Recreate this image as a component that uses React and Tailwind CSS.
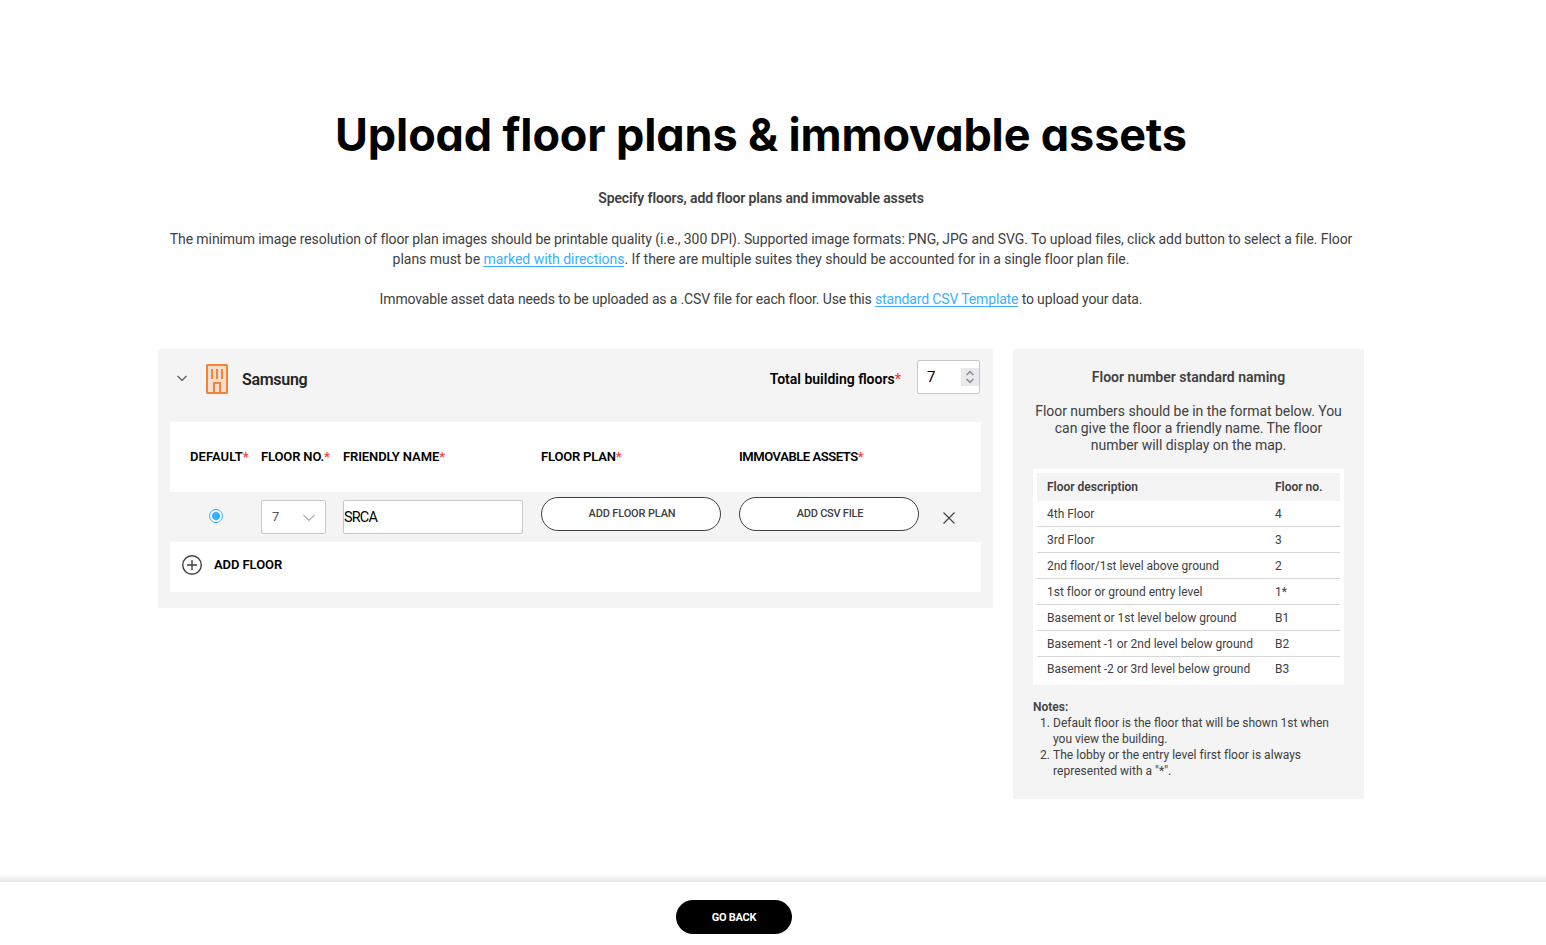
const Star = () => <span className="text-[#ff3b3b]">*</span>;

const floors = [
  ["4th Floor", "4"],
  ["3rd Floor", "3"],
  ["2nd floor/1st level above ground", "2"],
  ["1st floor or ground entry level", "1*"],
  ["Basement or 1st level below ground", "B1"],
  ["Basement -1 or 2nd level below ground", "B2"],
  ["Basement -2 or 3rd level below ground", "B3"],
];

const Link = ({ children }) => (
  <a className="inline-block h-[17px] border-b border-[#38b1ff] leading-[18px] text-[#38b1ff]">{children}</a>
);

function BuildingIcon() {
  return (
    <svg width="22" height="30" viewBox="0 0 22 30" fill="none" stroke="#f08437" strokeWidth="2">
      <rect x="1" y="1" width="20" height="28" rx="0.6" fill="#f6dfd0" />
      <path d="M6 5v10M11 5v10M16 5v10" />
      <path d="M8 29V19h6v10" />
    </svg>
  );
}

function BuildingPanel() {
  return (
    <section className="h-[259px] w-[835px] rounded-[2px] bg-[#f4f4f4] px-3">
      <div className="flex h-[73px] pt-[11px]">
        <svg className="ml-[6px] mt-[14px]" width="12" height="9" viewBox="0 0 12 9" fill="none" stroke="#555" strokeWidth="1.2">
          <path d="M1.5 2L6 6.5L10.5 2" />
        </svg>
        <div className="ml-[18px] mt-1">
          <BuildingIcon />
        </div>
        <div className="ml-[14px] mt-[10px] text-[16px] leading-5 font-semibold tracking-[-0.3px] text-[#252525]">Samsung</div>
        <div className="ml-auto mt-[9px] text-[14px] leading-5 font-semibold text-black">
          Total building floors
          <Star />
        </div>
        <div className="ml-4 mr-px flex h-[34px] w-[63px] items-center justify-between rounded-[2px] border border-[#c8c8c8] bg-white pl-[9px]">
          <span className="text-[15px] leading-5 text-black">7</span>
          <span className="flex h-[18px] w-[18px] items-center justify-center bg-[#e9e9ed]">
            <svg width="10" height="14" viewBox="0 0 10 14" fill="none" stroke="#8f8f9d" strokeWidth="1.7">
              <path d="M1.5 5L5 1.7L8.5 5M1.5 9L5 12.3L8.5 9" />
            </svg>
          </span>
        </div>
      </div>

      <div className="grid h-[70px] grid-cols-[71px_82px_198px_198px_auto] items-center bg-white pl-5 text-[13px] font-semibold text-black">
        <div className="tracking-[0.06px]">DEFAULT<Star /></div>
        <div className="tracking-[-0.14px]">FLOOR NO.<Star /></div>
        <div className="tracking-[-0.1px]">FRIENDLY NAME<Star /></div>
        <div className="tracking-[-0.18px]">FLOOR PLAN<Star /></div>
        <div className="tracking-[-0.43px]">IMMOVABLE ASSETS<Star /></div>
      </div>

      <div className="flex h-[50px] items-start">
        <div className="ml-[39px] mt-[17px] flex h-[14px] w-[14px] items-center justify-center rounded-full border border-[#38b1ff] bg-white">
          <div className="h-2 w-2 rounded-full bg-[#38b1ff]" />
        </div>
        <div className="ml-[38px] mt-2 flex h-[34px] w-[65px] items-center justify-between rounded-[2px] border border-[#c8c8c8] bg-white pl-[10px] pr-[9px]">
          <span className="text-[13px] text-[#555]">7</span>
          <svg className="mt-px" width="14" height="8" viewBox="0 0 14 8" fill="none" stroke="#777" strokeWidth="1">
            <path d="M1.5 1L7 6.5L12.5 1" />
          </svg>
        </div>
        <div className="ml-[17px] mt-2 flex h-[34px] w-[180px] items-center rounded-[2px] border border-[#c8c8c8] bg-white pt-0.5 text-[14.5px] tracking-[-0.85px] text-black">
          SRCA
        </div>
        <button className="ml-[18px] mt-[5px] h-[34px] w-[180px] rounded-full border border-[#404040] bg-white pt-px pl-[2px] text-[11px] font-medium tracking-[-0.15px] text-[#404040]">ADD FLOOR PLAN</button>
        <button className="ml-[18px] mt-[5px] h-[34px] w-[180px] rounded-full border border-[#404040] bg-white pt-px pl-[2px] text-[11px] font-medium tracking-[-0.25px] text-[#404040]">ADD CSV FILE</button>
        <svg className="ml-6 mt-5" width="12" height="12" viewBox="0 0 12 12" fill="none" stroke="#404040" strokeWidth="1.1">
          <path d="M0.5 0.5L11.5 11.5M11.5 0.5L0.5 11.5" />
        </svg>
      </div>

      <div className="flex h-[50px] bg-white pl-3 pt-[13px]">
        <svg width="20" height="20" viewBox="0 0 20 20" fill="none" stroke="#404040" strokeWidth="1.4">
          <circle cx="10" cy="10" r="9.3" />
          <path d="M10 5v10M5 10h10" />
        </svg>
        <div className="ml-3 text-[13px] leading-[19px] font-semibold tracking-[-0.08px] text-black">ADD FLOOR</div>
      </div>
    </section>
  );
}

function NamingPanel() {
  return (
    <aside className="h-[450px] w-[351px] rounded-[2px] bg-[#f4f4f4] px-5 pt-[18px] text-[#404040]">
      <h2 className="text-center text-[14px] leading-5 font-semibold">Floor number standard naming</h2>
      <p className="mt-4 text-center text-[14px] leading-[17px] whitespace-nowrap tracking-[-0.04px]">
        Floor numbers should be in the format below. You
        <br />
        can give the floor a friendly name. The floor
        <br />
        number will display on the map.
      </p>
      <div className="mt-[15px] h-[216px] bg-white p-1 text-[12px]">
        <div className="grid h-7 grid-cols-[228px_auto] items-center bg-[#f4f4f4] pl-[10px] font-semibold">
          <span>Floor description</span>
          <span>Floor no.</span>
        </div>
        {floors.map(([name, no]) => (
          <div key={name} className="grid h-[26px] grid-cols-[228px_auto] items-center border-b border-[#d6d6d6] pl-[10px] tracking-[-0.02px] last:h-6 last:border-b-0">
            <span>{name}</span>
            <span>{no}</span>
          </div>
        ))}
      </div>
      <div className="mt-[14px] text-[12px] leading-4">
        <div className="font-semibold">Notes:</div>
        <ol className="list-decimal pl-5 whitespace-nowrap">
          <li>Default floor is the floor that will be shown 1st when<br />you view the building.</li>
          <li className="tracking-[0.03px]">The lobby or the entry level first floor is always<br />represented with a "*".</li>
        </ol>
      </div>
    </aside>
  );
}

export default function App() {
  return (
    <div className="flex h-[945px] flex-col overflow-hidden bg-white font-['Roboto',sans-serif]">
      <main className="ml-[158px] w-[1206px] grow">
        <h1 className="mt-[105px] h-[60px] text-center font-['Inter',sans-serif] text-[45px] leading-[60px] font-bold tracking-[-0.14px] whitespace-nowrap text-black [font-feature-settings:'cv11']">
          Upload floor plans &amp; immovable assets
        </h1>
        <div className="mt-[23px] text-center text-[14px] leading-5 whitespace-nowrap text-[#404040]">
          <p className="font-semibold tracking-[-0.12px]">Specify floors, add floor plans and immovable assets</p>
          <p className="mt-[21px] tracking-[-0.088px]">
            The minimum image resolution of floor plan images should be printable quality (i.e., 300 DPI). Supported image formats: PNG, JPG and SVG. To upload files, click add button to select a file. Floor
          </p>
          <p className="tracking-[-0.033px]">
            plans must be <Link>marked with directions</Link>. If there are multiple suites they should be accounted for in a single floor plan file.
          </p>
          <p className="mt-5 tracking-[-0.148px]">
            Immovable asset data needs to be uploaded as a .CSV file for each floor. Use this <Link>standard CSV Template</Link> to upload your data.
          </p>
        </div>
        <div className="mt-10 flex gap-5">
          <BuildingPanel />
          <NamingPanel />
        </div>
      </main>
      <div className="h-2 bg-gradient-to-b from-white to-[#e6e6e6]" />
      <footer className="flex h-[63px] shrink-0 bg-white pl-[676px] pt-[18px]">
        <button className="h-[34px] w-[116px] rounded-full bg-black pt-0.5 text-[11px] font-bold tracking-[-0.25px] text-white">GO BACK</button>
      </footer>
    </div>
  );
}
